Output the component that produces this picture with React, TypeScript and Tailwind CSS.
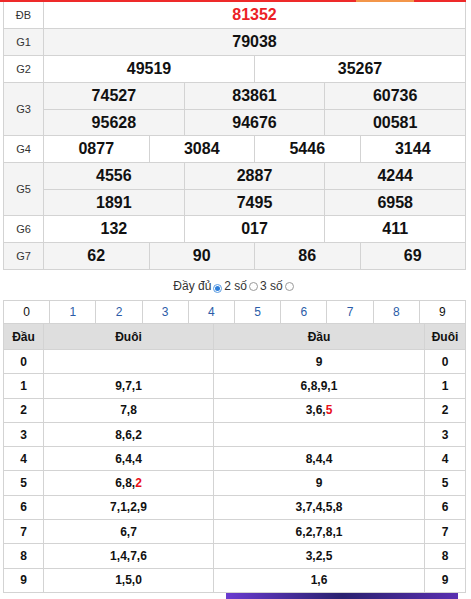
import React from 'react';

type Row = { label: string; lines: string[][]; gray: boolean; red?: boolean };

const PRIZES: Row[] = [
  { label: 'ĐB', lines: [['81352']], gray: false, red: true },
  { label: 'G1', lines: [['79038']], gray: true },
  { label: 'G2', lines: [['49519', '35267']], gray: false },
  { label: 'G3', lines: [['74527', '83861', '60736'], ['95628', '94676', '00581']], gray: true },
  { label: 'G4', lines: [['0877', '3084', '5446', '3144']], gray: false },
  { label: 'G5', lines: [['4556', '2887', '4244'], ['1891', '7495', '6958']], gray: true },
  { label: 'G6', lines: [['132', '017', '411']], gray: false },
  { label: 'G7', lines: [['62', '90', '86', '69']], gray: true },
];

// đầu / đuôi lists per digit; *Red = index shown in red (special prize)
const LOTO: { left: string[]; leftRed?: number; right: string[]; rightRed?: number }[] = [
  { left: [], right: ['9'] },
  { left: ['9', '7', '1'], right: ['6', '8', '9', '1'] },
  { left: ['7', '8'], right: ['3', '6', '5'], rightRed: 2 },
  { left: ['8', '6', '2'], right: [] },
  { left: ['6', '4', '4'], right: ['8', '4', '4'] },
  { left: ['6', '8', '2'], leftRed: 2, right: ['9'] },
  { left: ['7', '1', '2', '9'], right: ['3', '7', '4', '5', '8'] },
  { left: ['6', '7'], right: ['6', '2', '7', '8', '1'] },
  { left: ['1', '4', '7', '6'], right: ['3', '2', '5'] },
  { left: ['1', '5', '0'], right: ['1', '6'] },
];

const Digits = ({ items, red }: { items: string[]; red?: number }) => (
  <span>
    {items.map((d, i) => (
      <React.Fragment key={i}>
        {i > 0 && ','}
        <span className={i === red ? 'text-[#e8101a]' : ''}>{d}</span>
      </React.Fragment>
    ))}
  </span>
);

const Radio = ({ checked }: { checked?: boolean }) =>
  checked ? (
    <span className="inline-flex w-[9px] h-[9px] rounded-full border border-[#5a9be0] bg-white items-center justify-center mx-[2px] align-[-1px]">
      <span className="w-[5px] h-[5px] rounded-full bg-[#2d7fdc]" />
    </span>
  ) : (
    <span className="inline-block w-[9px] h-[9px] rounded-full border border-[#9a9a9a] bg-white mx-[2px] align-[-1px]" />
  );

export default function App() {
  return (
    <div className="w-[471px] bg-white text-[#111] font-['Liberation_Sans',Arial,sans-serif]">
      {/* top accent bar */}
      <div className="flex w-[466px] h-[2px]">
        <div className="w-[356px] bg-[#ee2a2a]" />
        <div className="w-[58px] bg-[#f3964a]" />
        <div className="flex-1 bg-[#ee2a2a]" />
      </div>

      {/* prize table */}
      <div className="ml-[3px] w-[463px] border-x border-[#d3d3d3]">
        {PRIZES.map((p) => (
          <div key={p.label} className={`flex border-b border-[#d3d3d3] ${p.gray ? 'bg-[#f4f4f4]' : 'bg-white'}`}>
            <div className="w-[40px] shrink-0 border-r border-[#d3d3d3] flex items-center justify-center text-[11px] text-[#333]">
              {p.label}
            </div>
            <div className="flex-1 flex flex-col">
              {p.lines.map((line, li) => (
                <div key={li} className={`flex h-[26px] ${li > 0 ? 'border-t border-[#d3d3d3]' : ''}`}>
                  {line.map((n, ni) => (
                    <div
                      key={ni}
                      className={`flex-1 flex items-center justify-center text-[16px] font-bold ${
                        ni > 0 ? 'border-l border-[#d3d3d3]' : ''
                      } ${p.red ? 'text-[#ec1f26]' : 'text-[#111]'}`}
                    >
                      {n}
                    </div>
                  ))}
                </div>
              ))}
            </div>
          </div>
        ))}
      </div>

      {/* options */}
      <div className="w-[469px] mt-[9px] mb-[7px] h-[14px] leading-[14px] text-center text-[12px] text-[#333]">
        Đầy đủ<Radio checked />2 số<Radio />3 số<Radio />
      </div>

      {/* loto table */}
      <div className="ml-[3px] w-[463px] border-x border-t border-[#d3d3d3]">
        <div className="flex h-[23px] border-b border-[#d3d3d3] text-[12px]">
          {Array.from({ length: 10 }, (_, i) => (
            <div
              key={i}
              className={`flex-1 flex items-center justify-center ${i > 0 ? 'border-l border-[#d3d3d3]' : ''} ${
                i === 0 || i === 9 ? 'text-[#111]' : 'text-[#2b5ca8]'
              }`}
            >
              {i}
            </div>
          ))}
        </div>
        <div className="flex h-[26px] border-b border-[#d3d3d3] bg-[#dedede] text-[12px] font-bold">
          <div className="w-[40px] border-r border-[#d3d3d3] flex items-center justify-center">Đầu</div>
          <div className="w-[170px] border-r border-[#d3d3d3] flex items-center justify-center">Đuôi</div>
          <div className="flex-1 border-r border-[#d3d3d3] flex items-center justify-center">Đầu</div>
          <div className="w-[40px] flex items-center justify-center">Đuôi</div>
        </div>
        {LOTO.map((r, i) => (
          <div key={i} className="flex h-[24.3px] border-b border-[#d3d3d3] text-[12px] font-bold">
            <div className="w-[40px] border-r border-[#d3d3d3] flex items-center justify-center">{i}</div>
            <div className="w-[170px] border-r border-[#d3d3d3] flex items-center justify-center">
              <Digits items={r.left} red={r.leftRed} />
            </div>
            <div className="flex-1 border-r border-[#d3d3d3] flex items-center justify-center">
              <Digits items={r.right} red={r.rightRed} />
            </div>
            <div className="w-[40px] flex items-center justify-center">{i}</div>
          </div>
        ))}
      </div>

      {/* ad strip peeking below */}
      <div className="ml-[226px] w-[232px] h-[40px] bg-gradient-to-r from-[#6a3bd0] via-[#2a2170] to-[#5a2fb0]" />
    </div>
  );
}
